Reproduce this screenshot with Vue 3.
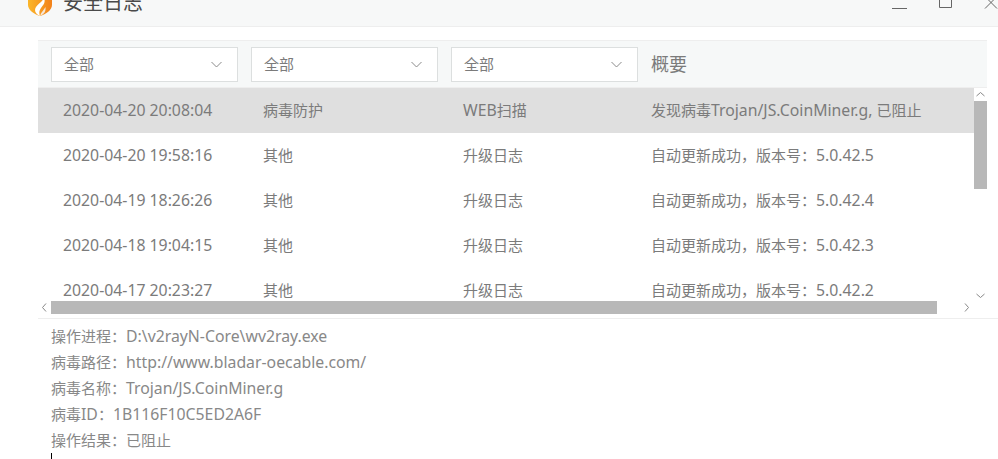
<script setup>
const latinSplit = /([\u0000-\u2fff]+)/
const parts = (text) =>
  text
    .split(latinSplit)
    .filter(Boolean)
    .map((t) => ({ t, latin: /^[\u0000-\u2fff]/.test(t) }))

const selects = [1, 2, 3]
const rows = [
  { time: '2020-04-20 20:08:04', type: '病毒防护', source: 'WEB扫描', summary: '发现病毒Trojan/JS.CoinMiner.g, 已阻止', active: true },
  { time: '2020-04-20 19:58:16', type: '其他', source: '升级日志', summary: '自动更新成功，版本号：5.0.42.5' },
  { time: '2020-04-19 18:26:26', type: '其他', source: '升级日志', summary: '自动更新成功，版本号：5.0.42.4' },
  { time: '2020-04-18 19:04:15', type: '其他', source: '升级日志', summary: '自动更新成功，版本号：5.0.42.3' },
  { time: '2020-04-17 20:23:27', type: '其他', source: '升级日志', summary: '自动更新成功，版本号：5.0.42.2' }
]
const details = [
  '操作进程：D:\\v2rayN-Core\\wv2ray.exe',
  '病毒路径：http://www.bladar-oecable.com/',
  '病毒名称：Trojan/JS.CoinMiner.g',
  '病毒ID：1B116F10C5ED2A6F',
  '操作结果：已阻止'
]
</script>

<template>
  <div class="window">
    <header class="titlebar">
      <div class="brand">
        <svg class="logo" width="24" height="24" viewBox="0 0 24 24">
          <defs>
            <linearGradient id="shield" x1="0" y1="0" x2="1" y2="0">
              <stop offset="0" stop-color="#fbb62a" />
              <stop offset="1" stop-color="#f2811a" />
            </linearGradient>
          </defs>
          <path d="M0 0H24V13C24 18 18 22 12 24C6 22 0 18 0 13Z" fill="url(#shield)" />
          <path d="M12 24C7 22 6 18 8 15C10 12 14 10 16 6C18 11 15 13 13 16C11 19 11 21 12 24Z" fill="#fff" />
          <path d="M12 24C16 22 18 20 17.500 15C16 18 13 20 12 24Z" fill="#f6e6d6" />
        </svg>
        <span class="title">安全日志</span>
      </div>
      <div class="controls">
        <svg width="15" height="10" viewBox="0 0 15 10" class="min"><path d="M0 8.500H15" stroke="#666" /></svg>
        <svg width="13" height="8" viewBox="0 0 13 8" class="max"><path d="M.5 0V7.500H12.500V0" fill="none" stroke="#666" /></svg>
        <svg width="14" height="9" viewBox="0 0 14 9" class="close"><path d="M1 8.500L9.500 0M13 8.500L4.500 0" fill="none" stroke="#666" /></svg>
      </div>
    </header>

    <section class="panel">
      <div class="filters">
        <div v-for="s in selects" :key="s" class="select">
          <span class="select-text">全部</span>
          <svg width="11" height="7" viewBox="0 0 11 7"><path d="M.5 1L5.500 6L10.500 1" fill="none" stroke="#8a8a8a" /></svg>
        </div>
        <div class="heading">概要</div>
      </div>

      <div class="body">
        <div class="rows">
          <div v-for="r in rows" :key="r.time" class="row" :class="{ active: r.active }">
            <span v-for="(cell, i) in [r.time, r.type, r.source, r.summary]" :key="i" class="cell">
              <span v-for="(p, j) in parts(cell)" :key="j" :class="{ latin: p.latin }">{{ p.t }}</span>
            </span>
          </div>
        </div>
        <div class="vbar">
          <svg class="arrow" width="13" height="13" viewBox="0 0 13 13"><path d="M2.500 8L6.500 4.500L10.500 8" fill="none" stroke="#888" /></svg>
          <div class="vthumb"></div>
          <svg class="arrow down" width="13" height="13" viewBox="0 0 13 13"><path d="M2.500 5L6.500 8.500L10.500 5" fill="none" stroke="#888" /></svg>
        </div>
      </div>

      <div class="hbar">
        <svg class="arrow" width="13" height="13" viewBox="0 0 13 13"><path d="M8 2.500L4.500 6.500L8 10.500" fill="none" stroke="#888" /></svg>
        <div class="hthumb"></div>
        <svg class="arrow right" width="13" height="13" viewBox="0 0 13 13"><path d="M5 2.500L8.500 6.500L5 10.500" fill="none" stroke="#888" /></svg>
      </div>

      <div class="details">
        <div v-for="d in details" :key="d" class="line">
          <span v-for="(p, j) in parts(d)" :key="j" :class="{ latin: p.latin }">{{ p.t }}</span>
        </div>
      </div>
    </section>

    <div class="caret"></div>
  </div>
</template>

<style scoped>
.window {
  position: relative;
  width: 998px;
  height: 459px;
  overflow: hidden;
  background: #fff;
  font-family: "Noto Sans CJK SC", sans-serif;
  font-size: 15px;
  color: #7b7b7b;
}
.latin {
  font-family: "Noto Sans", "Noto Sans CJK SC", sans-serif;
  font-size: 15.8px;
}
.titlebar {
  height: 26px;
  box-sizing: content-box;
  display: flex;
  justify-content: space-between;
  background: #f7f8f8;
  border-bottom: 1px solid #eeeeee;
  overflow: hidden;
}
.brand {
  display: flex;
  align-items: flex-end;
  padding: 0 0 10px 28px;
  height: 16px;
}
.logo {
  flex: none;
  margin-right: 11px;
}
.title {
  font-size: 20px;
  line-height: 26px;
  color: #4a4a4a;
  margin-bottom: 1px;
}
.controls {
  display: flex;
  align-items: flex-start;
}
.min { margin-right: 32px; }
.max { margin-right: 32px; }
.panel {
  margin: 13px 11px 0 38px;
}
.filters {
  display: flex;
  align-items: center;
  gap: 13px;
  padding-left: 13px;
  background: #f6f8f8;
  border-top: 1px solid #eeeeee;
  border-bottom: 1px solid #eeeeee;
  box-sizing: content-box;
  height: 46px;
}
.select {
  width: 187px;
  height: 35px;
  box-sizing: border-box;
  background: #fff;
  border: 1px solid #dcdfdf;
  display: flex;
  align-items: center;
  justify-content: space-between;
  padding: 0 15px 0 12px;
}
.select-text {
  padding-bottom: 2px;
}
.heading {
  font-size: 18px;
  color: #7b7b7b;
  padding-bottom: 2px;
}
.body {
  display: flex;
  height: 213px;
}
.rows {
  flex: 1;
  overflow: hidden;
}
.row {
  height: 45px;
  display: grid;
  grid-template-columns: 200px 200px 188px 1fr;
  align-items: center;
  padding-left: 25px;
  white-space: nowrap;
}
.cell {
  padding-bottom: 2px;
}
.row.active {
  background: #dfdfdf;
}
.vbar {
  width: 13px;
  display: flex;
  flex-direction: column;
}
.vthumb {
  height: 88px;
  background: #b8b8b8;
}
.arrow {
  display: block;
  flex: none;
}
.down {
  margin-top: auto;
  margin-bottom: -1px;
}
.hbar {
  height: 13px;
  display: flex;
  background: #fff;
}
.hthumb {
  width: 886px;
  background: #b8b8b8;
}
.right {
  margin-left: 23px;
}
.details {
  margin-top: 4px;
  margin-right: -11px;
  border-top: 1px solid #eeeeee;
  padding: 4px 0 0 13px;
}
.line {
  height: 26px;
  line-height: 26px;
  white-space: nowrap;
  color: #888;
}
.caret {
  position: absolute;
  left: 51px;
  top: 453px;
  width: 1px;
  height: 6px;
  background: #000;
}
</style>
